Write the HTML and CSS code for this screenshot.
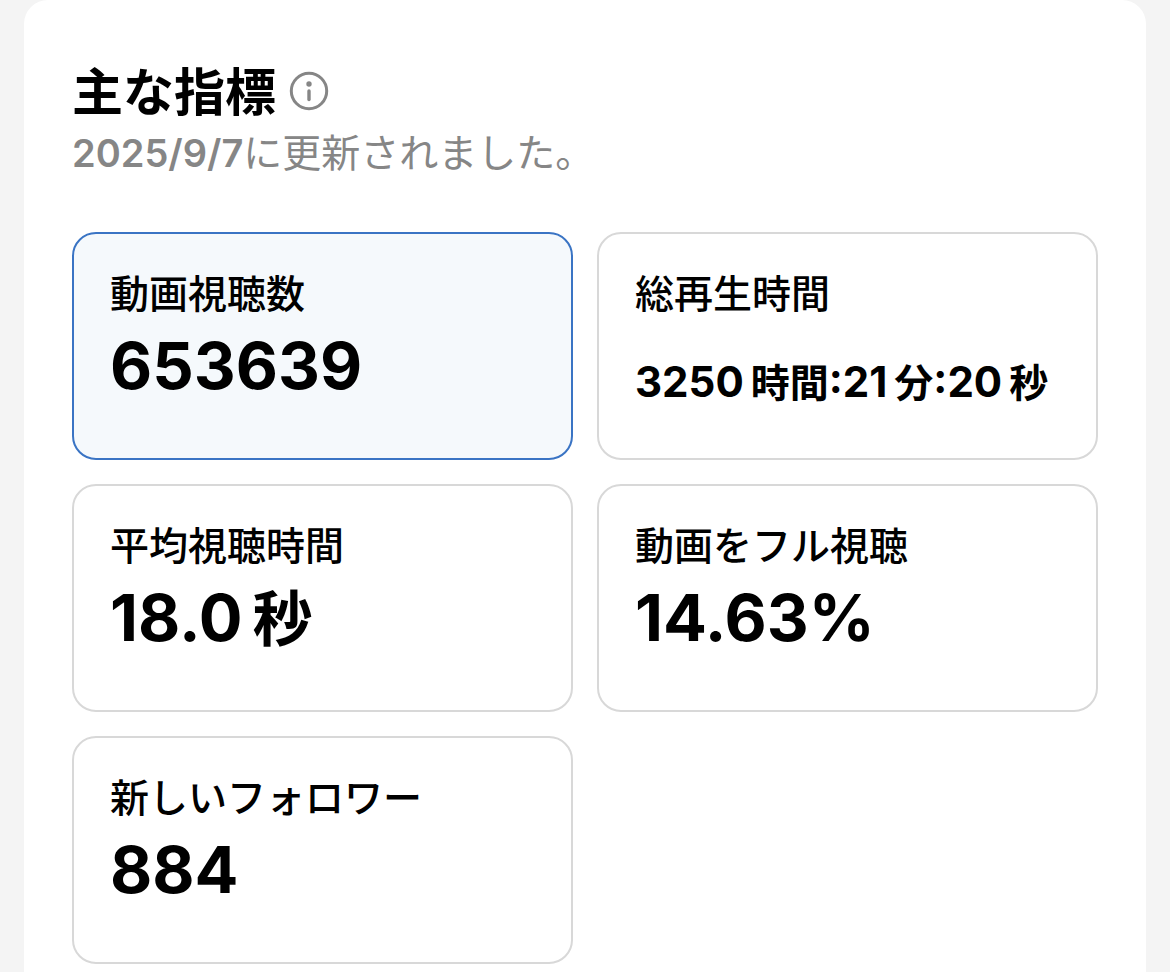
FILE: index.html
```html
<!DOCTYPE html>
<html lang="ja">
<head>
  <meta charset="UTF-8">
  <meta name="viewport" content="width=device-width, initial-scale=1.0">
  <title>主な指標</title>
  <link rel="stylesheet" href="styles.css">
</head>
<body>
  <main class="panel">
    <header class="panel-header">
      <div class="title-row">
        <h1>主な指標</h1>
        <button class="info" type="button" aria-label="詳細">
          <svg viewBox="0 0 40 40" width="40" height="40" fill="none" stroke="#868686" stroke-width="3">
            <circle cx="20" cy="20" r="17.7"/>
            <path d="M20 20v8.5" stroke-width="3.4" stroke-linecap="round"/>
            <circle cx="20" cy="13" r="2.7" fill="#868686" stroke="none"/>
          </svg>
        </button>
      </div>
      <p class="updated"><time datetime="2025-09-07">2025/9/7</time>に更新されました。</p>
    </header>

    <div class="metrics">
      <button class="metric selected" type="button">
        <span class="label">動画視聴数</span>
        <span class="value">653639</span>
      </button>
      <button class="metric" type="button">
        <span class="label">総再生時間</span>
        <span class="value small">3250<span class="unit">時間</span>:21<span class="unit">分</span>:20<span class="unit">秒</span></span>
      </button>
      <button class="metric" type="button">
        <span class="label">平均視聴時間</span>
        <span class="value">18.0<span class="unit">秒</span></span>
      </button>
      <button class="metric" type="button">
        <span class="label">動画をフル視聴</span>
        <span class="value">14.63%</span>
      </button>
      <button class="metric" type="button">
        <span class="label">新しいフォロワー</span>
        <span class="value">884</span>
      </button>
    </div>
  </main>
</body>
</html>
```

FILE: styles.css
```css
* {
  box-sizing: border-box;
}
body {
  margin: 0;
  background: #f4f4f4;
  color: #000;
  font-family: Inter, "Noto Sans CJK JP", sans-serif;
}
.panel {
  margin: 0 24px;
  padding: 60px 48px 8px;
  min-height: 100vh;
  background: #fff;
  border-radius: 24px 24px 0 0;
}
.title-row {
  display: flex;
  align-items: flex-start;
  gap: 13px;
}
h1 {
  margin: 0;
  font-size: 51px;
  line-height: 66px;
  font-weight: 700;
}
.info {
  display: flex;
  padding: 11px 0 0;
  border: none;
  background: none;
  cursor: pointer;
}
.updated {
  margin: 3px 0 55px;
  color: #868686;
  font-size: 39px;
  line-height: 48px;
  font-weight: 400;
}
.updated time {
  font-size: 38px;
  font-weight: 600;
}
.metrics {
  display: grid;
  grid-template-columns: 1fr 1fr;
  gap: 24px;
}
.metric {
  display: flex;
  flex-direction: column;
  height: 228px;
  padding: 36px;
  border: 2px solid #d8d8d8;
  border-radius: 24px;
  background: #fff;
  color: #000;
  font-family: inherit;
  text-align: left;
  white-space: nowrap;
  cursor: pointer;
}
.metric.selected {
  border-color: #3a74c4;
  background: #f5f9fc;
}
.label {
  font-size: 39px;
  line-height: 48px;
  font-weight: 500;
}
.value {
  font-size: 65px;
  line-height: 96px;
  font-weight: 700;
}
.value .unit {
  margin-left: 10px;
  font-size: 60px;
}
.value.small {
  margin-top: 16px;
  font-size: 42px;
}
.value.small .unit {
  margin-left: 7px;
  font-size: 39px;
}
```
